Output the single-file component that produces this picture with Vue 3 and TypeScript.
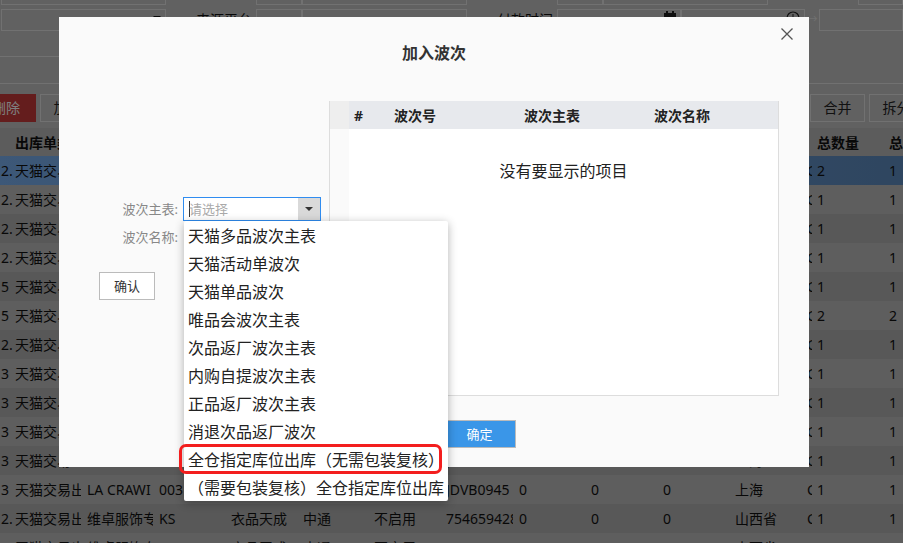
<script setup lang="ts">
interface Row { n: string; b: string; c: string; g: string; h: string; qty: string; tot: string; hl?: boolean }
const la = { b: 'LA CRAWI', c: '003', g: 'JDVB0945', h: '上海' }
const wz = { b: '维卓服饰专', c: 'KS', g: '754659428', h: '山西省' }
const rows: Row[] = [
  { n: '2.', ...la, qty: '2', tot: '1', hl: true },
  { n: '2.', ...la, qty: '1', tot: '1' },
  { n: '2.', ...la, qty: '1', tot: '1' },
  { n: '2.', ...la, qty: '1', tot: '1' },
  { n: '5', ...la, qty: '1', tot: '1' },
  { n: '5', ...la, qty: '2', tot: '2' },
  { n: '2.', ...la, qty: '1', tot: '1' },
  { n: '3', ...la, qty: '1', tot: '1' },
  { n: '3', ...la, qty: '1', tot: '1' },
  { n: '3', ...la, qty: '1', tot: '1' },
  { n: '3', ...la, qty: '1', tot: '1' },
  { n: '3', ...la, qty: '1', tot: '1' },
  { n: '2.', ...wz, qty: '1', tot: '1' },
  { n: '2.', ...wz, qty: '1', tot: '1' },
]
const options = ['天猫多品波次主表', '天猫活动单波次', '天猫单品波次', '唯品会波次主表', '次品返厂波次主表', '内购自提波次主表', '正品返厂波次主表', '消退次品返厂波次', '全仓指定库位出库（无需包装复核）', '（需要包装复核）全仓指定库位出库']
</script>

<template>
  <div class="page">
    <div class="frow first">
      <span class="box w165"></span>
      <span class="lab"></span>
      <span class="box w46"></span><span class="box w165"></span>
      <span class="lab"></span>
      <span class="box w46"></span><span class="box w165"></span>
      <span class="lab"></span>
      <span class="box fill"></span>
    </div>
    <div class="frow second">
      <span class="box w165 withcaret"><i class="mini"></i></span>
      <span class="lab">来源平台</span>
      <span class="box w46"></span><span class="box w165"></span>
      <span class="lab">付款时间</span>
      <span class="box w124 date">
        <svg width="12" height="12" viewBox="0 0 12 12"><path d="M0 2h12v10H0zM2 0h2v3H2zM8 0h2v3H8z" fill="#1c1c1c" /></svg>
      </span>
      <span class="box w124 date">
        <svg width="14" height="14" viewBox="0 0 14 14"><circle cx="7" cy="7" r="6" fill="none" stroke="#222" stroke-width="1.2" /><path d="M7 3v4.5h3" fill="none" stroke="#222" /></svg>
      </span>
      <span class="arrow">→</span>
      <span class="box fill"></span>
    </div>
    <div class="line short"></div>
    <div class="line full"></div>
    <div class="toolbar">
      <button class="tb danger">删除</button>
      <button class="tb">加入</button>
      <span class="grow"></span>
      <button class="tb">合并</button>
      <button class="tb split">拆分</button>
    </div>
    <div class="grid head">
      <span></span><span class="wide">出库单类型</span>
      <span></span><span></span><span></span><span></span><span></span><span></span><span></span><span></span><span></span><span></span>
      <span>总数量</span><span class="cut">总</span>
    </div>
    <div v-for="(r, i) in rows" :key="i" class="grid row" :class="{ hl: r.hl, odd: i % 2 === 1 }">
      <span class="n">{{ r.n }}</span>
      <span>天猫交易出</span>
      <span>{{ r.b }}</span>
      <span>{{ r.c }}</span>
      <span>衣品天成</span>
      <span>中通</span>
      <span>不启用</span>
      <span>{{ r.g }}</span>
      <span>0</span><span>0</span><span>0</span>
      <span class="prov"><span class="pv">{{ r.h }}</span><span class="c">C</span></span>
      <span>{{ r.qty }}</span>
      <span class="cut">{{ r.tot }}</span>
    </div>

    <div class="overlay"></div>

    <section class="modal">
      <button class="close" aria-label="关闭">
        <svg width="12" height="12" viewBox="0 0 12 12"><path d="M.5.5l11 11M11.5.5l-11 11" stroke="#555" stroke-width="1.3" fill="none" /></svg>
      </button>
      <h2 class="title">加入波次</h2>
      <div class="body">
        <div class="form">
          <div class="field">
            <label>波次主表:</label>
            <div class="select">
              <span class="caret"></span><span class="ph">请选择</span>
              <span class="drop"><i></i></span>
            </div>
          </div>
          <div class="field two">
            <label>波次名称:</label>
          </div>
          <button class="confirm">确认</button>
          <ul class="menu">
            <li v-for="o in options" :key="o">{{ o }}</li>
          </ul>
          <div class="mark"></div>
        </div>
        <div class="right">
          <div class="table">
            <div class="thead">
              <span class="gutter"></span>
              <span class="th num">#</span>
              <span class="th c1">波次号</span>
              <span class="th c2">波次主表</span>
              <span class="th c3">波次名称</span>
            </div>
            <div class="tbody">
              <span class="gutter"></span>
              <div class="empty">没有要显示的项目</div>
            </div>
          </div>
          <div class="foot"><button class="ok">确定</button></div>
        </div>
      </div>
    </section>
  </div>
</template>

<style scoped>
.page { position: relative; width: 903px; height: 543px; overflow: hidden; background: #c2c2c2; font: 14px/20px "Noto Sans", "Noto Sans CJK SC", sans-serif; color: #111; }
.frow { display: flex; align-items: stretch; }
.first { height: 21px; margin-top: -16px; }
.second { height: 22px; margin-top: 4px; }
.box { position: relative; display: block; border: 1px solid #e2e2e2; box-sizing: border-box; }
.w165 { width: 165px; }
.frow > .box:first-child { margin-left: 1px; }
.lab { width: 90px; text-align: right; padding: 1px 4px 0 0; box-sizing: border-box; }
.w46 { width: 46px; }
.w124 { width: 124px; }
.fill { flex: 1; }
.arrow { width: 14px; text-align: center; color: #e0e0e0; font-size: 11px; }
.date svg { position: absolute; right: 4px; top: 1px; }
.mini { position: absolute; left: 151px; top: 6px; border: 4px solid transparent; border-top-color: #111; border-bottom-width: 0; }
.line { height: 1px; background: #e2e2e2; }
.short { width: 166px; margin-top: 25px; }
.full { margin-top: 26px; }
.toolbar { display: flex; gap: 4px; height: 28px; margin-top: 10px; }
.grow { flex: 1; }
.tb { box-sizing: border-box; width: 55px; border: 1px solid #e2e2e2; background: #c2c2c2; padding: 0; font: inherit; color: #222; white-space: nowrap; }
.danger { width: 60px; margin-left: -24px; background: #c83a3a; border-color: #c83a3a; color: #fff; }
.split { margin-right: -21px; }
.grid { display: grid; grid-template-columns: 15px 72px 72px 72px 72px 71px 72px 73px 72px 72px 72px 82px 72px 14px; height: 29px; line-height: 29px; white-space: nowrap; }
.grid > span { display: block; overflow: hidden; border-right: 6px solid transparent; }
.grid > .n { border-right: 0; padding-left: 1px; }
.grid > .cut, .grid > .prov { border-right: 0; }
.head { height: 28px; line-height: 29px; margin-top: 6px; background: #b8b8b8; font-weight: 700; }
.grid > .wide { overflow: visible; }
.row { background: #b0b0b0; }
.row.odd { background: #bcbcbc; }
.row.hl { background: linear-gradient(90deg, #7ab0f0, #5e8cc0); }
.prov { display: flex !important; }
.pv { width: 72px; flex: none; }
.c { width: 5px; overflow: hidden; }
.overlay { position: absolute; inset: 0; background: rgba(0, 0, 0, .5); }

.modal { position: absolute; left: 59px; top: 17px; width: 750px; height: 450px; background: #fafafa; }
.close { position: absolute; right: 16px; top: 11px; width: 12px; height: 12px; padding: 0; border: 0; background: none; display: flex; }
.title { margin: 0; padding-top: 26px; height: 58px; text-align: center; font-size: 16px; line-height: 20px; font-weight: 700; color: #333; }
.body { display: flex; }
.form { position: relative; width: 270px; padding-top: 96px; box-sizing: border-box; }
.field { display: flex; align-items: center; height: 24px; }
.field.two { margin-top: 4px; }
label { width: 119px; text-align: right; font-size: 13px; color: #888; line-height: 24px; }
.select { position: relative; width: 138px; height: 24px; margin-left: 5px; border: 1px solid #2f8cf0; box-sizing: border-box; background: #fff; display: flex; align-items: center; }
.caret { width: 1px; height: 16px; background: #333; margin-left: 5px; }
.ph { font-size: 13px; color: #aaa; margin-left: -1px; }
.drop { position: absolute; right: 0; top: 0; bottom: 0; width: 22px; background: #d9d9d9; display: flex; align-items: center; justify-content: center; }
.drop i { border: 4px solid transparent; border-top-color: #333; border-bottom-width: 0; }
.confirm { display: block; margin: 23px 0 0 40px; width: 56px; height: 28px; box-sizing: border-box; border: 1px solid #bbb; background: #fff; font: inherit; font-size: 13px; color: #333; padding: 0; }
.menu { position: absolute; left: 125px; top: 120px; width: 264px; height: 280px; margin: 0; padding: 1px 0; box-sizing: border-box; list-style: none; background: #fff; border-radius: 2px; box-shadow: 0 2px 10px rgba(0, 0, 0, .3); z-index: 2; }
.menu li { height: 28px; line-height: 28px; font-size: 16px; color: #222; padding-left: 4px; white-space: nowrap; }
.mark { position: absolute; left: 120px; top: 343px; width: 263px; height: 30px; box-sizing: border-box; border: 3px solid #f31e1e; border-radius: 7px; z-index: 3; }
.right { width: 450px; }
.table { height: 295px; box-sizing: border-box; border: 1px solid #ddd; border-width: 0 1px 1px 1px; background: #fff; display: flex; flex-direction: column; }
.thead { display: flex; height: 28px; background: #e7e9ed; font-size: 14px; font-weight: 700; line-height: 29px; color: #222; }
.gutter { width: 19px; flex: none; background: #eee; }
.th { display: block; white-space: nowrap; }
.num { width: 45px; padding-left: 5px; box-sizing: border-box; }
.c1, .c2 { width: 130px; }
.tbody { flex: 1; display: flex; }
.tbody .gutter { background: #fafafa; height: 100px; }
.empty { flex: 1; text-align: center; font-size: 16px; padding-top: 30px; color: #222; line-height: 24px; }
.foot { padding: 24px 0 0 114px; }
.ok { display: block; width: 73px; height: 28px; border: 1px solid #bbb; background: #3a96e8; color: #fff; font: inherit; font-size: 13px; padding: 0; }
</style>
